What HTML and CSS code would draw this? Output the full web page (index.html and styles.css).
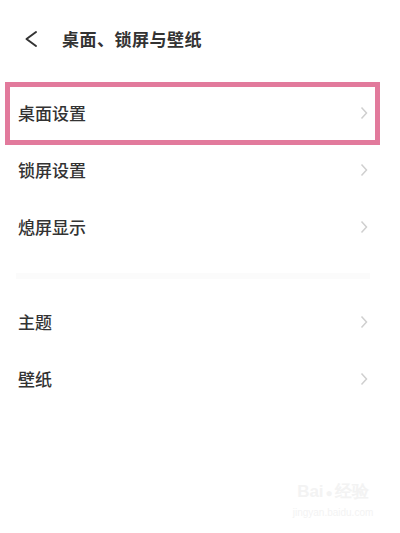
FILE: index.html
```html
<!DOCTYPE html>
<html lang="zh">
<head>
<meta charset="utf-8">
<link rel="stylesheet" href="styles.css">
</head>
<body>
<div class="screen">
  <header class="header">
    <svg class="back" width="14" height="20" viewBox="0 0 14 20"><path d="M12 4 L2.5 11 L12 18" fill="none" stroke="#333" stroke-width="2" stroke-linecap="round" stroke-linejoin="round"/></svg>
    <h1 class="title">桌面、锁屏与壁纸</h1>
  </header>
  <ul class="list">
    <li class="row row-highlight"><span class="label">桌面设置</span><svg class="chev" width="8" height="14" viewBox="0 0 8 14"><path d="M1.5 1.5 L6.5 7 L1.5 12.5" fill="none" stroke="#cfcfcf" stroke-width="1.5"/></svg></li>
    <li class="row"><span class="label">锁屏设置</span><svg class="chev" width="8" height="14" viewBox="0 0 8 14"><path d="M1.5 1.5 L6.5 7 L1.5 12.5" fill="none" stroke="#cfcfcf" stroke-width="1.5"/></svg></li>
    <li class="row"><span class="label">熄屏显示</span><svg class="chev" width="8" height="14" viewBox="0 0 8 14"><path d="M1.5 1.5 L6.5 7 L1.5 12.5" fill="none" stroke="#cfcfcf" stroke-width="1.5"/></svg></li>
  </ul>
  <div class="divider"></div>
  <ul class="list">
    <li class="row"><span class="label">主题</span><svg class="chev" width="8" height="14" viewBox="0 0 8 14"><path d="M1.5 1.5 L6.5 7 L1.5 12.5" fill="none" stroke="#cfcfcf" stroke-width="1.5"/></svg></li>
    <li class="row"><span class="label">壁纸</span><svg class="chev" width="8" height="14" viewBox="0 0 8 14"><path d="M1.5 1.5 L6.5 7 L1.5 12.5" fill="none" stroke="#cfcfcf" stroke-width="1.5"/></svg></li>
  </ul>
  <div class="watermark">
    <div class="wm-top">Bai<span class="wm-paw">●</span>经验</div>
    <div class="wm-bottom">jingyan.baidu.com</div>
  </div>
</div>
</body>
</html>
```
FILE: styles.css
```css
* { box-sizing: border-box; }
html, body {
  margin: 0;
  padding: 0;
  background: #ffffff;
}
body {
  font-family: "Noto Sans CJK SC", "Noto Sans", sans-serif;
  color: #333333;
}
.screen {
  position: relative;
  width: 400px;
  height: 533px;
  overflow: hidden;
  background: #ffffff;
}
.header {
  display: flex;
  align-items: center;
  height: 76px;
  padding-left: 24px;
  margin-bottom: 8px;
}
.back { display: block; flex: none; }
.title {
  margin: 0 0 0 24px;
  font-size: 17px;
  font-weight: 700;
  letter-spacing: 0.5px;
  color: #333333;
}
.list {
  list-style: none;
  margin: 0;
  padding: 0;
}
.row {
  position: relative;
  display: flex;
  align-items: center;
  justify-content: space-between;
  height: 57px;
  padding: 0 32px 0 18px;
}
.label {
  font-size: 17px;
  font-weight: 500;
  color: #333333;
}
.chev { display: block; flex: none; }
.row-highlight::after {
  content: "";
  position: absolute;
  left: 5px;
  right: 20px;
  top: -2px;
  bottom: -4px;
  border: 5px solid #e27a9c;
  pointer-events: none;
}
.divider {
  height: 38px;
  padding: 18px 30px 0 16px;
}
.divider::before {
  content: "";
  display: block;
  height: 6px;
  background: #fbfbfb;
}
.watermark {
  position: absolute;
  left: 283px;
  top: 480px;
  width: 100px;
  color: #f3f3f3;
  font-family: "Liberation Sans", sans-serif;
  text-align: center;
}
.wm-top { font-size: 17px; font-weight: 700; line-height: 24px; }
.wm-paw { font-size: 12px; margin: 0 2px; }
.wm-bottom { font-size: 10px; line-height: 16px; }
```
